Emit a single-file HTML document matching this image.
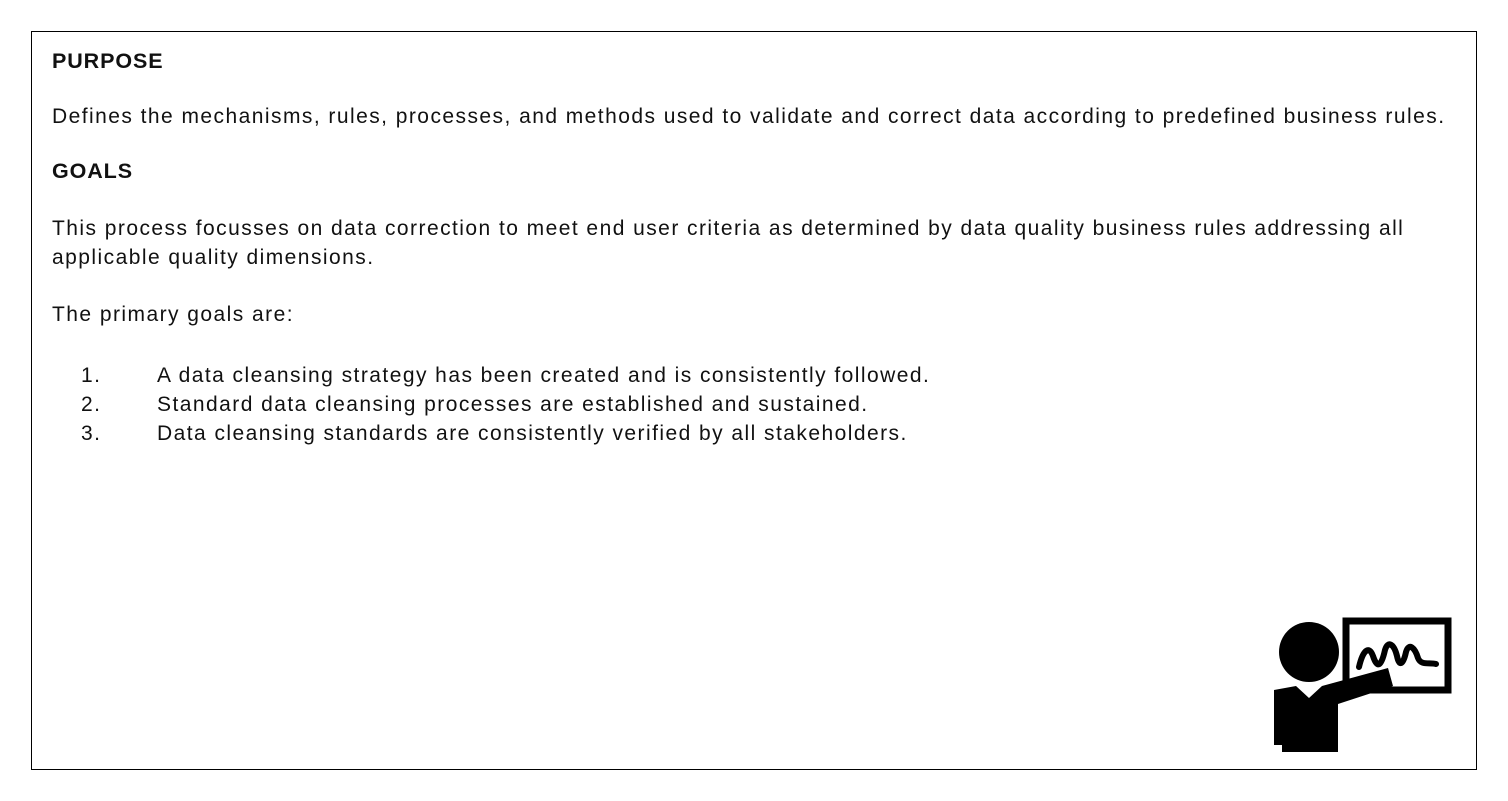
<!DOCTYPE html>
<html><head><style>
html,body{margin:0;padding:0;background:#fff;width:1508px;height:801px;overflow:hidden}
.box{position:absolute;left:31px;top:31px;width:1444px;height:737px;border:1px solid #000}
.t{position:absolute;left:52px;font-family:"Liberation Sans",sans-serif;font-size:21px;color:#111;white-space:nowrap;line-height:29px;letter-spacing:1.45px}
.b{font-weight:bold;letter-spacing:0.9px;font-size:21.5px}
</style></head><body>
<div class="box"></div>
<div class="t b" style="top:47px">PURPOSE</div>
<div class="t" style="top:102px">Defines the mechanisms, rules, processes, and methods used to validate and correct data according to predefined business rules.</div>
<div class="t b" style="top:157px">GOALS</div>
<div class="t" style="top:214px">This process focusses on data correction to meet end user criteria as determined by data quality business rules addressing all<br>applicable quality dimensions.</div>
<div class="t" style="top:300px">The primary goals are:</div>
<div class="t" style="top:361px;left:81px">1.</div><div class="t" style="top:361px;left:157px">A data cleansing strategy has been created and is consistently followed.</div>
<div class="t" style="top:390px;left:81px">2.</div><div class="t" style="top:390px;left:157px">Standard data cleansing processes are established and sustained.</div>
<div class="t" style="top:419px;left:81px">3.</div><div class="t" style="top:419px;left:157px">Data cleansing standards are consistently verified by all stakeholders.</div>
<svg style="position:absolute;left:0;top:0" width="1508" height="801">
<rect x="1346" y="621" width="102" height="69" fill="none" stroke="#000" stroke-width="7"/>
<circle cx="1309" cy="652" r="30" fill="#000"/>
<path d="M1359,667 C1363,650 1369,645 1373,656 C1377,668 1381,668 1385,650 C1388,640 1394,644 1397,656 C1399,666 1403,666 1406,652 C1409,642 1415,648 1418,658 C1421,666 1430,662 1436,664" fill="none" stroke="#000" stroke-width="6" stroke-linecap="round"/>
<path d="M1274,690 L1296,686 L1309,698 L1322,686 L1388,668 L1393,686 L1338,704 L1338,752 L1282,752 L1282,745 L1274,745 Z" fill="#000"/>
</svg>
</body></html>
